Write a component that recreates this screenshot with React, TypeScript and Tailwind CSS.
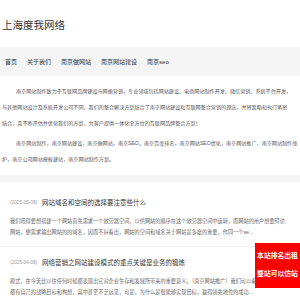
const font = "font-['Liberation_Sans','Noto_Sans_CJK_SC',sans-serif]";

const navItems = ['首页', '关于我们', '南京做网站', '南京网站建设', '南京seo'];

const articles = [
  {
    date: '(2025-05-08)',
    title: '网站域名和空间的选择要注意些什么',
    desc: '我们晓得要想搭建一个网站首先需求一个效劳器空间，以供网站的顺序在这个效劳器空间中运转，而网站的用户想要拜访网站，便需求输出网站的的域名，因而不好看出，网站的空间和域名关于网站是多麽的重要，作同一个se...',
  },
  {
    date: '(2025-04-08)',
    title: '网络营销之网站建设模式的重点关键是业务的锻炼',
    desc: '模式，在今天比以往任何时候都表现出它对企业生存和发展所带来的重要意义。（南京网站推广）我们可以看到，很多企业都有自己的战略目标和构想，其中甚至不乏远见，可是，为什么是很能够实现目标，赢得领先地位的成功...',
  },
];

export default function App() {
  return (
    <div className={`relative h-[300px] w-[300px] overflow-hidden bg-white ${font}`}>
      <header className="flex h-[47px] items-center pl-[2px] pt-[3px]">
        <h1 className="text-[10.5px] leading-[14px] text-[#333]">上海度我网络</h1>
      </header>

      <nav className="flex h-[29px] items-center gap-[10px] bg-[#f5f5f5] pl-[5px] text-[6px] leading-[8px] text-[#333]">
        {navItems.map((item) => (
          <span key={item}>{item}</span>
        ))}
      </nav>

      <section className="w-[292px] pl-[2px] pt-[7px] text-[5.1px] leading-[16px] text-[#555]">
        <p className="indent-[14px]">
          南京网站制作致力于互联网品牌建设与网络营销，专业领域包括网站建设、电商网站制作开发、微信营销、系统平台开发，
          <br />
          与其他网站设计及系统开发公司不同，我们的整合解决方案结合了南京网站建设和互联网整合营销的理念，并将策略和执行紧密结合，且不断评估并优化我们的方案，为客户提供一体化全方位的互联网品牌整合方案！
        </p>
        <p className="mt-[4px] whitespace-nowrap indent-[14px]">
          南京网站制作，南京网站建设，南京做网站，南京SEO，南京百度排名，南京网站SEO优化，南京网站推广，南京网站制作维
          <br />
          护，南京公司网站模板建站，南京网站制作方案。
        </p>
      </section>

      <div className="mt-[8px] h-[7px] bg-[#f5f5f5]" />

      <section className="pt-[5px]">
        {articles.map((a) => (
          <article key={a.title} className="border-b border-[#eee] px-[10px] pb-[8px] pt-[10px]">
            <div className="flex items-center gap-[5px] leading-[12px]">
              <span className="text-[4.7px] text-[#999]">{a.date}</span>
              <h2 className="text-[6.5px] text-[#333]">{a.title}</h2>
            </div>
            <p className="mt-[7px] line-clamp-2 text-[5.2px] leading-[11px] text-[#666]">{a.desc}</p>
          </article>
        ))}
      </section>

      <div className="absolute right-0 top-[243px] flex h-[45px] w-[45px] flex-col items-center bg-[#ff0000] pt-[4px] text-[6.8px] font-bold leading-[18px] text-white">
        <span>本站排名出租</span>
        <span>整站可以仿站</span>
      </div>
    </div>
  );
}
